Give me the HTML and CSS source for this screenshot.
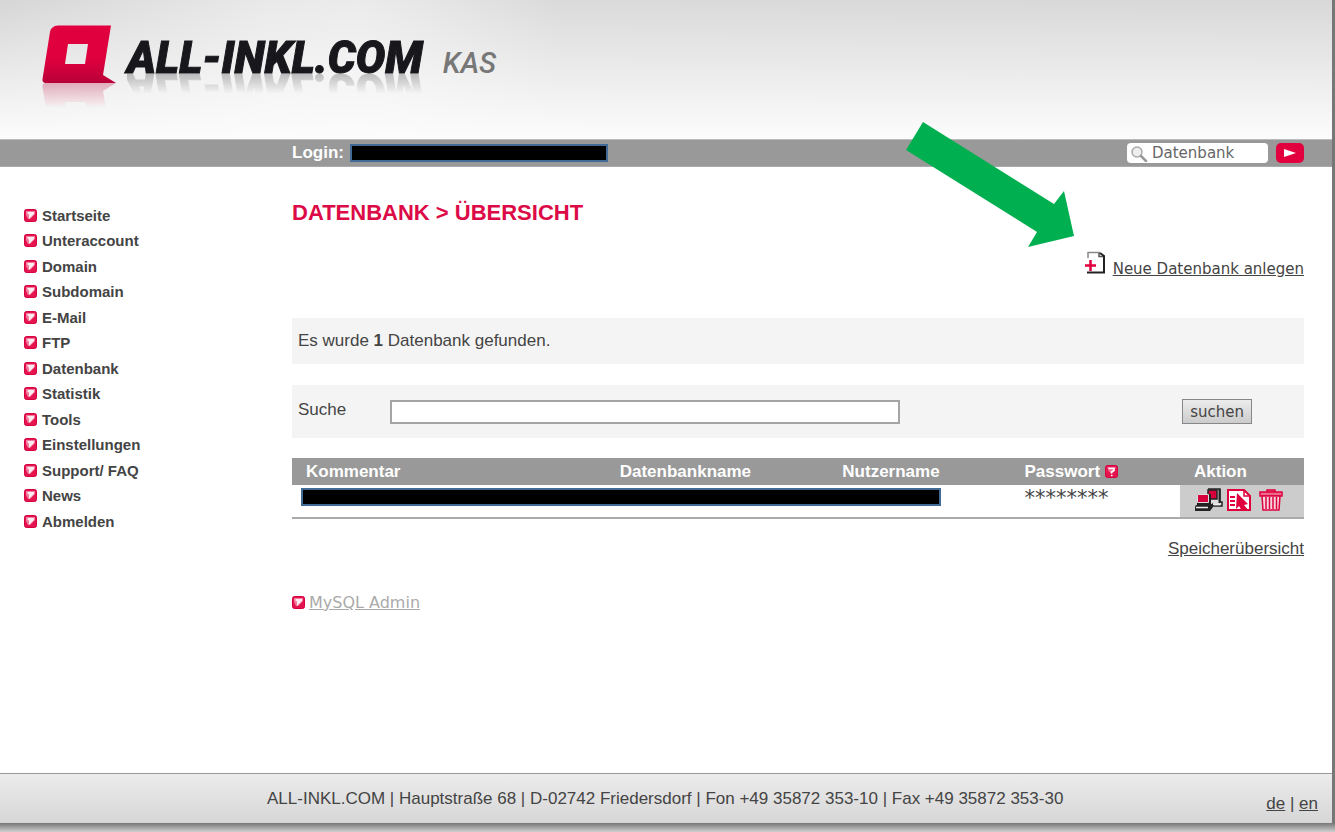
FILE: index.html
```
<!DOCTYPE html>
<html lang="de">

<head>
    <meta charset="UTF-8">
    <meta name="viewport" content="width=device-width, initial-scale=1.0">
    <title>ALL-INKL.COM KAS - Datenbank</title>
    <link rel="stylesheet" href="styles.css">
</head>

<body>
    <!-- Symbole -->
    <svg class="symbole" aria-hidden="true">
        <defs>
            <linearGradient id="rot" x1="0" y1="0" x2="0" y2="1">
                <stop offset="0" stop-color="#e2003f" />
                <stop offset="0.6" stop-color="#de003d" />
                <stop offset="1" stop-color="#b80038" />
            </linearGradient>
        </defs>
        <symbol id="pfeil" viewBox="0 0 13 13">
            <rect x="0.5" y="0.5" width="12" height="12" rx="2" fill="#e5144f" stroke="#d4003f" />
            <path d="M2 2h9v3L6 10H4L2 6z" fill="#f27c9e" />
            <path d="M3.500 3H10v2L5.500 9.500H5V5.500L3.500 4.500z" fill="#fff" opacity="0.85" />
        </symbol>
        <symbol id="hilfe" viewBox="0 0 13 13">
            <rect x="0.5" y="0.5" width="12" height="12" rx="2" fill="#e5144f" stroke="#d4003f" />
            <path d="M2 2h9L8 8 4 7z" fill="#f0688f" />
            <path d="M3.500 3.500h5.500v2L6.500 7v1.500M6 10.500h1.500" fill="none" stroke="#fff" stroke-width="1.600" />
        </symbol>
    </svg>

    <div class="seite">
        <header class="kopf">
            <a class="logo" href="#">
                <svg class="logo-bild" viewBox="0 0 76 60" width="76" height="60" aria-hidden="true">
                    <path d="M16 0.500H69L61 50l13 8H4Q0 58 0.500 54L8 7Q9 1 16 0.500zM26 19l-3 20h20l3-20z"
                        fill="url(#rot)" fill-rule="evenodd" />
                </svg>
                <span class="logo-text">ALL-INKL.COM</span>
                <span class="logo-kas">KAS</span>
            </a>
        </header>

        <div class="leiste">
            <div class="login">Login: <span class="balken"></span></div>
            <form class="schnellsuche">
                <label class="suchfeld">
                    <svg viewBox="0 0 18 17" width="18" height="17" aria-hidden="true">
                        <circle cx="7" cy="7" r="5" fill="#eee" stroke="#aaa" stroke-width="1.500" />
                        <path d="M11 11l5 5" stroke="#999" stroke-width="2.500" stroke-linecap="round" />
                    </svg>
                    <input type="text" value="Datenbank" aria-label="Schnellsuche">
                </label>
                <button type="button" class="btn-los" aria-label="Los">
                    <svg viewBox="0 0 14 10" width="14" height="10"><path d="M1 1l12 4-12 4z" fill="#fff" /></svg>
                </button>
            </form>
        </div>

        <div class="inhalt">
            <nav class="menue">
                <a href="#"><svg class="marke"><use href="#pfeil" /></svg>Startseite</a>
                <a href="#"><svg class="marke"><use href="#pfeil" /></svg>Unteraccount</a>
                <a href="#"><svg class="marke"><use href="#pfeil" /></svg>Domain</a>
                <a href="#"><svg class="marke"><use href="#pfeil" /></svg>Subdomain</a>
                <a href="#"><svg class="marke"><use href="#pfeil" /></svg>E-Mail</a>
                <a href="#"><svg class="marke"><use href="#pfeil" /></svg>FTP</a>
                <a href="#"><svg class="marke"><use href="#pfeil" /></svg>Datenbank</a>
                <a href="#"><svg class="marke"><use href="#pfeil" /></svg>Statistik</a>
                <a href="#"><svg class="marke"><use href="#pfeil" /></svg>Tools</a>
                <a href="#"><svg class="marke"><use href="#pfeil" /></svg>Einstellungen</a>
                <a href="#"><svg class="marke"><use href="#pfeil" /></svg>Support/ FAQ</a>
                <a href="#"><svg class="marke"><use href="#pfeil" /></svg>News</a>
                <a href="#"><svg class="marke"><use href="#pfeil" /></svg>Abmelden</a>
            </nav>

            <main class="haupt">
                <h1>DATENBANK &gt; ÜBERSICHT</h1>

                <div class="neu">
                    <svg viewBox="0 0 22 24" width="22" height="24" aria-hidden="true">
                        <path d="M4 7V1.500h12" fill="none" stroke="#888" stroke-width="1.500" />
                        <path d="M15 2v3.500h4" fill="none" stroke="#555" stroke-width="1.500" />
                        <path d="M16 2l4 3v16.500H3" fill="none" stroke="#222" stroke-width="2" />
                        <path d="M1 14.500h11M6.500 9v11" stroke="#e2003f" stroke-width="2.500" />
                    </svg>
                    <a href="#">Neue Datenbank anlegen</a>
                </div>

                <p class="kasten meldung">Es wurde <b>1</b> Datenbank gefunden.</p>

                <form class="kasten suche">
                    <label for="suche">Suche</label>
                    <input type="text" id="suche">
                    <button type="button" class="btn-suchen">suchen</button>
                </form>

                <table class="liste">
                    <thead>
                        <tr>
                            <th class="sp-kommentar">Kommentar</th>
                            <th class="sp-name">Datenbankname</th>
                            <th class="sp-nutzer">Nutzername</th>
                            <th class="sp-passwort">Passwort <svg class="marke"><use href="#hilfe" /></svg></th>
                            <th class="sp-aktion">Aktion</th>
                        </tr>
                    </thead>
                    <tbody>
                        <tr>
                            <td colspan="3" class="verdeckt"><span class="balken"></span></td>
                            <td class="passwort">********</td>
                            <td class="aktion">
                                <div class="aktionen">
                                    <a href="#" aria-label="Verbinden">
                                        <svg viewBox="0 0 29 24" width="29" height="24">
                                            <path d="M14 1h12v13h2v4H16v-3" fill="#ddd" stroke="#222" stroke-width="1.500" />
                                            <path d="M14 2h9v9h-9z" fill="#d8003c" stroke="#222" stroke-width="1.500" />
                                            <path d="M25.500 1v14" stroke="#222" stroke-width="2" />
                                            <path d="M3 6h14v11H3z" fill="#222" />
                                            <path d="M3.500 6.500h11v8h-11z" fill="#d8003c" stroke="#ddd" />
                                            <path d="M2 17h14l3-2v4l-3 4H1v-4z" fill="#222" />
                                            <path d="M2 19.500h12M20 16.500h6" stroke="#eee" stroke-width="1.500" />
                                        </svg>
                                    </a>
                                    <a href="#" aria-label="Bearbeiten">
                                        <svg viewBox="0 0 24 24" width="24" height="24">
                                            <path d="M1 2h16l6 6v14H1z" fill="#fff" stroke="#df003e" stroke-width="2" />
                                            <path d="M17 2v6h6" fill="none" stroke="#df003e" stroke-width="1.500" />
                                            <path d="M3 9h5M3 13h5M3 17h5" stroke="#df003e" stroke-width="2" />
                                            <path d="M10 5l11 11-4 1 5 6h-7l-3-5-3 3z" fill="#df003e" />
                                        </svg>
                                    </a>
                                    <a href="#" aria-label="Löschen">
                                        <svg viewBox="0 0 24 24" width="24" height="24">
                                            <path d="M8 4V2h8v2M1 4h22v4H1z" fill="#eb6b8e" stroke="#df003e" stroke-width="1.500" />
                                            <path d="M3 8h18l-1 14H4z" fill="#f7d5de" stroke="#df003e" stroke-width="1.500" />
                                            <path d="M7 9v12M10.500 9v12M14 9v12M17.500 9v12" stroke="#df003e" stroke-width="1.500" />
                                        </svg>
                                    </a>
                                </div>
                            </td>
                        </tr>
                    </tbody>
                </table>

                <div class="speicher"><a href="#">Speicherübersicht</a></div>

                <div class="admin">
                    <svg class="marke"><use href="#pfeil" /></svg>
                    <a href="#">MySQL Admin</a>
                </div>
            </main>
        </div>

        <footer class="fuss">
            <span class="adresse">ALL-INKL.COM | Hauptstraße 68 | D-02742 Friedersdorf | Fon +49 35872 353-10 | Fax +49 35872 353-30</span>
            <span class="sprache"><a href="#">de</a> | <a href="#">en</a></span>
        </footer>

        <!-- Hinweispfeil auf "Neue Datenbank anlegen" -->
        <svg class="hinweis" viewBox="0 0 170 126" width="170" height="126" aria-hidden="true">
            <path d="M18 1L149 83l10-13 10 45-46 11 9-15L1 29z" fill="#00b050" />
        </svg>
    </div>
</body>

</html>
```
FILE: styles.css
```
* {
    box-sizing: border-box;
}

body {
    margin: 0;
    padding: 0 3px 9px 0;
    background: linear-gradient(to top, #cfcfcf, #777 9px);
    font-family: "Liberation Sans", Arial, sans-serif;
    font-size: 17px;
    color: #444;
}

a {
    color: #444;
}

.symbole {
    position: absolute;
    width: 0;
    height: 0;
}

.seite {
    position: relative;
    display: flex;
    flex-direction: column;
    min-height: calc(100vh - 9px);
    background-color: white;
}

/* Kopf */
.kopf {
    height: 139px;
    padding: 25px 0 0 42px;
    background: linear-gradient(to bottom, rgba(255, 255, 255, 0) 0, #fcfcfc 100%),
        linear-gradient(to right, #d6d6d6 0, #e9e9e9 20%, #ebebeb 27%, #e6e6e6 32%, #dadada 42%, #d8d8d8 100%);
}

.logo {
    display: flex;
    align-items: flex-start;
    text-decoration: none;
}

.logo-bild {
    -webkit-box-reflect: below -4px linear-gradient(transparent 55%, rgba(0, 0, 0, 0.3));
}

.logo-text {
    margin: 10px 0 0 9px;
    font-family: Roboto, "Liberation Sans", sans-serif;
    font-size: 44px;
    font-weight: 900;
    font-style: italic;
    line-height: 46px;
    color: #17171c;
    -webkit-text-stroke: 1px #17171c;
    -webkit-box-reflect: below -15px linear-gradient(transparent 40%, rgba(0, 0, 0, 0.35));
}

.logo-kas {
    margin: 22px 0 0 20px;
    font-family: Roboto, "Liberation Sans", sans-serif;
    font-size: 29px;
    font-style: italic;
    font-weight: 500;
    line-height: 32px;
    color: #777;
}

/* Leiste */
.leiste {
    display: flex;
    justify-content: space-between;
    align-items: center;
    height: 28px;
    padding: 0 28px 0 292px;
    background-color: #999;
    border-top: 1px solid #bbb;
    border-bottom: 1px solid #aaa;
}

.login {
    display: flex;
    align-items: center;
    gap: 6px;
    font-weight: bold;
    color: white;
}

.balken {
    display: block;
    height: 18px;
    background-color: black;
    border: 2px solid #426a96;
}

.login .balken {
    width: 258px;
}

.schnellsuche {
    display: flex;
    gap: 8px;
}

.suchfeld {
    display: flex;
    align-items: center;
    width: 141px;
    height: 20px;
    padding-left: 3px;
    background-color: white;
    border-radius: 4px;
}

.suchfeld svg {
    flex: none;
}

.suchfeld input {
    width: 100%;
    min-width: 0;
    padding: 0 0 0 4px;
    border: none;
    outline: none;
    background: transparent;
    font-family: "DejaVu Sans", Verdana, sans-serif;
    font-size: 15px;
    line-height: 18px;
    color: #666;
}

.btn-los {
    display: flex;
    align-items: center;
    justify-content: center;
    width: 28px;
    height: 20px;
    padding: 0;
    border: none;
    border-radius: 5px;
    background-color: #e2003f;
    cursor: pointer;
}

/* Inhalt */
.inhalt {
    display: flex;
    flex: 1;
    padding-right: 28px;
}

.menue {
    flex: none;
    width: 292px;
    padding: 36px 0 0 24px;
}

.menue a {
    display: flex;
    align-items: center;
    gap: 5px;
    height: 25px;
    font-size: 15px;
    font-weight: bold;
    text-decoration: none;
}

.menue a:nth-child(even) {
    margin-bottom: 1px;
}

.marke {
    flex: none;
    width: 13px;
    height: 13px;
}

.haupt {
    flex: 1;
    min-width: 0;
}

h1 {
    margin: 33px 0 0;
    font-size: 22px;
    line-height: 26px;
    font-weight: bold;
    color: #dc0a46;
}

.neu {
    display: flex;
    justify-content: flex-end;
    align-items: flex-start;
    gap: 7px;
    margin-top: 25px;
    font-family: "DejaVu Sans", Verdana, sans-serif;
    font-size: 15px;
}

.neu a {
    margin-top: 9px;
    line-height: 18px;
}

.kasten {
    margin: 0;
    padding: 0 6px;
    background-color: #f4f4f4;
}

.meldung {
    margin-top: 40px;
    line-height: 46px;
}

.suche {
    display: flex;
    align-items: center;
    height: 53px;
    margin-top: 21px;
}

.suche label {
    width: 92px;
    padding-bottom: 4px;
}

.suche input {
    width: 51%;
    height: 24px;
    border: 2px solid #a5a5a5;
    background-color: white;
}

.btn-suchen {
    height: 25px;
    margin: 0 46px 0 auto;
    padding: 0 7px;
    border: 1px solid #888;
    background: linear-gradient(#ececec, #ccc);
    font-family: "DejaVu Sans", Verdana, sans-serif;
    font-size: 15px;
    color: #444;
    cursor: pointer;
}

/* Tabelle */
.liste {
    width: 100%;
    margin-top: 20px;
    border-collapse: collapse;
    table-layout: fixed;
}

.liste th {
    height: 27px;
    padding: 0 0 0 14px;
    background-color: #999;
    font-size: 17px;
    text-align: left;
    color: white;
}

.liste th .marke {
    vertical-align: -1px;
}

.liste td {
    height: 33px;
    padding: 0;
    vertical-align: top;
    border-bottom: 2px solid #aaa;
}

.sp-kommentar {
    width: 31%;
}

.sp-name {
    width: 22%;
}

.sp-nutzer {
    width: 18%;
}

.sp-aktion {
    width: 124px;
}

.liste .verdeckt {
    padding: 3px 70px 0 9px;
}

.liste .passwort {
    padding: 1px 0 0 14px;
    font-family: "DejaVu Sans", Verdana, sans-serif;
    font-size: 21px;
    line-height: 24px;
}

.liste .aktion {
    background-color: #ccc;
}

.aktionen {
    display: flex;
    gap: 4px;
    padding: 3px 0 0 14px;
}

.aktionen a,
.aktionen svg {
    display: block;
}

.aktionen a:last-child {
    margin-left: 4px;
}

.speicher {
    margin-top: 20px;
    text-align: right;
}

.admin {
    display: flex;
    align-items: center;
    gap: 4px;
    margin-top: 34px;
    font-family: "DejaVu Sans", Verdana, sans-serif;
    font-size: 16px;
}

.admin a {
    color: #aaa;
}

/* Fuss */
.fuss {
    display: flex;
    height: 50px;
    padding: 0 14px 0 267px;
    border-top: 1px solid #999;
    background: linear-gradient(#ececec, #d6d6d6);
}

.adresse {
    padding-top: 15px;
}

.sprache {
    margin-left: auto;
    padding-top: 20px;
}

/* liegt ueber Leiste und Inhalt */
.hinweis {
    position: absolute;
    top: 121px;
    right: 257px;
}
```
